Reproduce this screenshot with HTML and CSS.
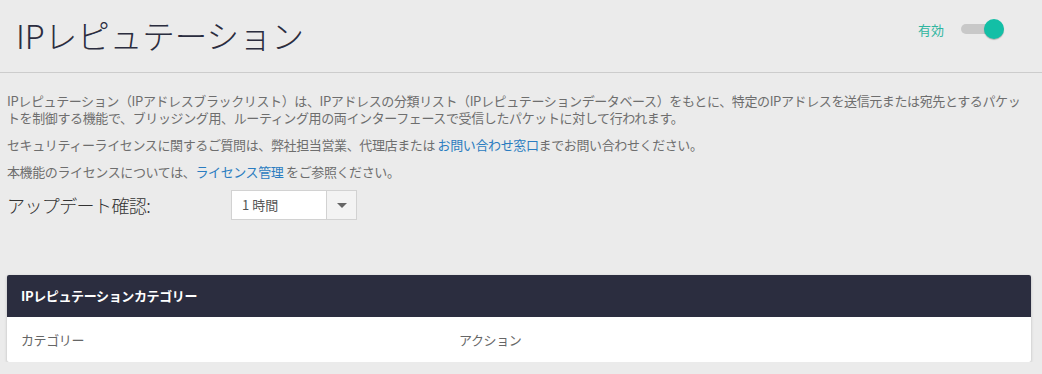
FILE: index.html
```html
<!DOCTYPE html>
<html lang="ja">
<head>
    <meta charset="UTF-8">
    <title>IPレピュテーション</title>
    <link rel="stylesheet" href="styles.css">
</head>
<body>
    <div class="page-header">
        <h1 class="page-title">IPレピュテーション</h1>
        <div class="switch-group">
            <span class="switch-label">有効</span>
            <span class="switch is-on"><span class="switch-knob"></span></span>
        </div>
    </div>

    <div class="content">
        <p class="note">IPレピュテーション（IPアドレスブラックリスト）は、IPアドレスの分類リスト（IPレピュテーションデータベース）をもとに、特定のIPアドレスを送信元または宛先とするパケットを制御する機能で、ブリッジング用、ルーティング用の両インターフェースで受信したパケットに対して行われます。</p>
        <p class="note">セキュリティーライセンスに関するご質問は、弊社担当営業、代理店または <a href="#">お問い合わせ窓口</a>までお問い合わせください。</p>
        <p class="note">本機能のライセンスについては、<a href="#">ライセンス管理</a> をご参照ください。</p>

        <div class="form-row">
            <label class="form-label">アップデート確認:</label>
            <div class="select">
                <span class="select-value">1 時間</span>
                <span class="select-arrow"></span>
            </div>
        </div>

        <div class="panel">
            <div class="panel-heading">IPレピュテーションカテゴリー</div>
            <div class="panel-row">
                <span class="col-category">カテゴリー</span>
                <span class="col-action">アクション</span>
            </div>
        </div>
    </div>
</body>
</html>
```

FILE: styles.css
```css
body {
    margin: 0;
    background-color: #ebebeb;
    font-family: "Noto Sans CJK JP", "Noto Sans", sans-serif;
    color: #6e6e6e;
}
.page-header {
    display: flex;
    justify-content: space-between;
    align-items: flex-start;
    height: 72px;
    border-bottom: 1px solid #cccccc;
}
.page-title {
    margin: 0;
    padding: 13px 0 0 16px;
    font-size: 32.5px;
    font-weight: 300;
    line-height: 44px;
    color: #2b2d3f;
}
.switch-group {
    display: flex;
    align-items: center;
    margin: 19px 39px 0 0;
}
.switch-label {
    font-size: 13px;
    color: #2fb59f;
    margin-right: 17px;
}
.switch {
    position: relative;
    display: inline-block;
    width: 42px;
    height: 10px;
    margin: 5px 0;
    border-radius: 5px;
    background-color: #c8c8c8;
}
.switch-knob {
    position: absolute;
    right: -1px;
    top: -5px;
    width: 20px;
    height: 20px;
    border-radius: 50%;
    background-color: #13bfa6;
    box-shadow: 0 1px 1px rgba(0, 0, 0, 0.25);
}
.content {
    padding: 19px 0 0 7px;
}
.note {
    margin: 0 0 10px;
    padding-right: 20px;
    font-size: 13px;
    line-height: 17px;
    letter-spacing: -0.38px;
}
.note a {
    color: #2a7cc0;
    text-decoration: none;
}
.form-row {
    display: flex;
    align-items: center;
    margin-top: 9px;
}
.form-label {
    width: 224px;
    font-size: 18px;
    font-weight: 300;
    letter-spacing: -0.6px;
    color: #333;
}
.select {
    display: flex;
    width: 124px;
    height: 28px;
    border: 1px solid #d2d2d2;
    background-color: #fff;
}
.select-value {
    flex: 1;
    padding-left: 10px;
    font-size: 13px;
    line-height: 28px;
    color: #555;
    border-right: 1px solid #d2d2d2;
}
.select-arrow {
    width: 29px;
    background-color: #f3f3f3;
    position: relative;
}
.select-arrow::after {
    content: "";
    position: absolute;
    left: 10px;
    top: 12px;
    border-left: 5px solid transparent;
    border-right: 5px solid transparent;
    border-top: 5px solid #666;
}
.panel {
    margin: 55px 11px 0 0;
    background-color: #fff;
    border-radius: 2px;
    box-shadow: 0 1px 3px rgba(0, 0, 0, 0.22);
}
.panel-heading {
    height: 42px;
    padding-left: 14px;
    background-color: #2b2d3f;
    color: #fff;
    font-size: 13px;
    font-weight: bold;
    line-height: 42px;
    letter-spacing: -0.38px;
    border-radius: 2px 2px 0 0;
}
.panel-row {
    display: flex;
    height: 45px;
    padding-left: 14px;
    align-items: center;
    font-size: 13px;
    letter-spacing: -0.38px;
    color: #666;
}
.col-category {
    width: 438px;
}
```
